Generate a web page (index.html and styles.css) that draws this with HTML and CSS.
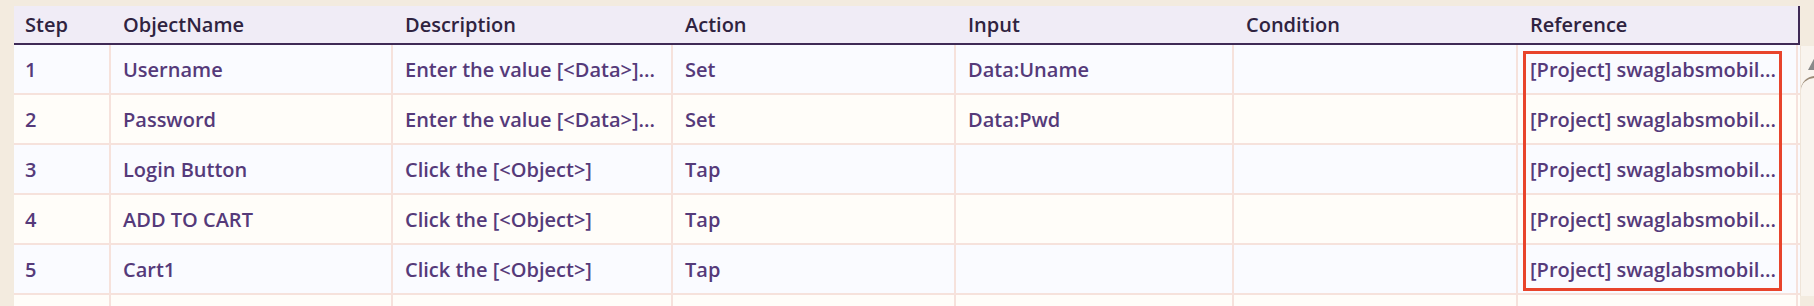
FILE: index.html
```html
<!DOCTYPE html>
<html>
<head>
<meta charset="utf-8">
<link rel="stylesheet" href="styles.css">
</head>
<body>
<div class="page">
  <div class="grid">
    <div class="row head">
      <div class="cell">Step</div>
      <div class="cell">ObjectName</div>
      <div class="cell">Description</div>
      <div class="cell">Action</div>
      <div class="cell">Input</div>
      <div class="cell">Condition</div>
      <div class="cell">Reference</div>
    </div>
    <div class="row odd">
      <div class="cell">1</div>
      <div class="cell">Username</div>
      <div class="cell">Enter the value [&lt;Data&gt;]...</div>
      <div class="cell">Set</div>
      <div class="cell">Data:Uname</div>
      <div class="cell"></div>
      <div class="cell">[Project] swaglabsmobil...</div>
    </div>
    <div class="row even">
      <div class="cell">2</div>
      <div class="cell">Password</div>
      <div class="cell">Enter the value [&lt;Data&gt;]...</div>
      <div class="cell">Set</div>
      <div class="cell">Data:Pwd</div>
      <div class="cell"></div>
      <div class="cell">[Project] swaglabsmobil...</div>
    </div>
    <div class="row odd">
      <div class="cell">3</div>
      <div class="cell">Login Button</div>
      <div class="cell">Click the [&lt;Object&gt;]</div>
      <div class="cell">Tap</div>
      <div class="cell"></div>
      <div class="cell"></div>
      <div class="cell">[Project] swaglabsmobil...</div>
    </div>
    <div class="row even">
      <div class="cell">4</div>
      <div class="cell">ADD TO CART</div>
      <div class="cell">Click the [&lt;Object&gt;]</div>
      <div class="cell">Tap</div>
      <div class="cell"></div>
      <div class="cell"></div>
      <div class="cell">[Project] swaglabsmobil...</div>
    </div>
    <div class="row odd">
      <div class="cell">5</div>
      <div class="cell">Cart1</div>
      <div class="cell">Click the [&lt;Object&gt;]</div>
      <div class="cell">Tap</div>
      <div class="cell"></div>
      <div class="cell"></div>
      <div class="cell">[Project] swaglabsmobil...</div>
    </div>
    <div class="row even">
      <div class="cell"></div>
      <div class="cell"></div>
      <div class="cell"></div>
      <div class="cell"></div>
      <div class="cell"></div>
      <div class="cell"></div>
      <div class="cell"></div>
    </div>
    <div class="highlight"></div>
  </div>
  <div class="side">
    <div class="side-panel">
      <div class="arrow"></div>
      <div class="curve"></div>
    </div>
  </div>
</div>
</body>
</html>
```

FILE: styles.css
```css
html, body {
  margin: 0;
  padding: 0;
  background: #f3ebdf;
  overflow: hidden;
  height: 306px;
}
.page {
  display: flex;
  align-items: flex-start;
  padding: 6px 0 0 14px;
  height: 300px;
  overflow: hidden;
}
.grid {
  position: relative;
  width: 1786px;
  display: flex;
  flex-direction: column;
  font-family: "Open Sans", "Lato", sans-serif;
  font-weight: 600;
  font-size: 20px;
  letter-spacing: 0;
}
.row {
  display: grid;
  grid-template-columns: 97px 282px 280px 283px 278px 284px 282px;
  height: 48px;
  border-bottom: 2px solid #f6e2dc;
  color: #553a7a;
}
.row .cell {
  display: flex;
  align-items: center;
  padding-left: 11px;
  border-right: 2px solid #f6e2dc;
  white-space: nowrap;
  overflow: hidden;
}
.row .cell:last-child {
  border-right: 2px solid #f6e2dc;
  width: 280px;
}
.row .cell + .cell {
  padding-left: 12px;
}
.odd { background: #fafbff; }
.even { background: #fffdf9; }
.head {
  height: 37px;
  background: #f0ecf6;
  border-bottom: 2px solid #3f2a56;
  color: #2f2340;
}
.head .cell {
  border-right: none;
}
.head .cell:last-child {
  border-right: 2px solid #3f2a56;
  width: 282px;
}
.cell {
  box-sizing: border-box;
}
.highlight {
  position: absolute;
  left: 1509px;
  top: 45px;
  width: 259px;
  height: 240px;
  border: 3px solid #e8442c;
  box-sizing: border-box;
}
.side {
  flex: 1;
  padding-top: 40px;
}
.side-panel {
  position: relative;
  height: 250px;
  background: #f9f4ee;
  border-left: 1px solid #efe4d8;
}
.arrow {
  position: absolute;
  left: 7px;
  top: 11px;
  width: 0;
  height: 0;
  border-left: 7px solid transparent;
  border-right: 7px solid transparent;
  border-bottom: 13px solid #8a8a8a;
}
.curve {
  position: absolute;
  left: 0;
  top: 30px;
  width: 30px;
  height: 20px;
  border-top: 2px solid #9b8a76;
  border-radius: 14px 14px 0 0;
}
```
